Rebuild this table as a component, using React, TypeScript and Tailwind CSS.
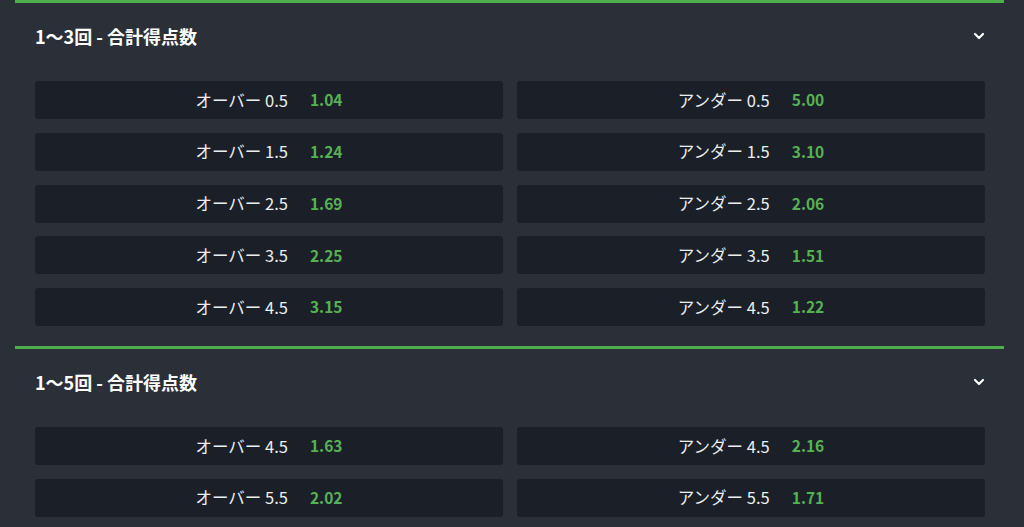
import React from "react";
import { ChevronDown } from "lucide-react";

type Line = { line: string; over: string; under: string };

const sections: { title: string; lines: Line[] }[] = [
    {
        title: "1〜3回 - 合計得点数",
        lines: [
            { line: "0.5", over: "1.04", under: "5.00" },
            { line: "1.5", over: "1.24", under: "3.10" },
            { line: "2.5", over: "1.69", under: "2.06" },
            { line: "3.5", over: "2.25", under: "1.51" },
            { line: "4.5", over: "3.15", under: "1.22" },
        ],
    },
    {
        title: "1〜5回 - 合計得点数",
        lines: [
            { line: "4.5", over: "1.63", under: "2.16" },
            { line: "5.5", over: "2.02", under: "1.71" },
        ],
    },
];

function OddsCell({ label, odds }: { label: string; odds: string }) {
    return (
        <button
            type="button"
            className="flex h-[38px] items-center justify-center gap-[22px] rounded-[3px] bg-[#1b2028]"
        >
            <span className="text-[16.5px] text-[#eceef0]">{label}</span>
            <span className="text-[15.5px] font-semibold text-[#58b055]">{odds}</span>
        </button>
    );
}

function Market({ title, lines }: { title: string; lines: Line[] }) {
    return (
        <section className="border-t-[3px] border-[#4dae4c] pl-5 pr-[19px] pb-[20px]">
            <div className="flex h-[66px] items-center justify-between">
                <h2 className="text-[18px] font-bold text-white">{title}</h2>
                <ChevronDown className="mr-[-2px] h-4 w-4 text-white" strokeWidth={3.2} />
            </div>
            <div className="mt-[12px] grid grid-cols-2 gap-x-[14px] gap-y-[13.75px]">
                {lines.map((l) => (
                    <React.Fragment key={l.line}>
                        <OddsCell label={`オーバー ${l.line}`} odds={l.over} />
                        <OddsCell label={`アンダー ${l.line}`} odds={l.under} />
                    </React.Fragment>
                ))}
            </div>
        </section>
    );
}

export default function App() {
    return (
        <div
            className="h-[527px] overflow-hidden bg-[#2b2f37] pl-[15px] pr-[20px]"
            style={{ fontFamily: '"Noto Sans CJK JP", "Noto Sans", sans-serif' }}
        >
            {sections.map((s) => (
                <Market key={s.title} title={s.title} lines={s.lines} />
            ))}
        </div>
    );
}
